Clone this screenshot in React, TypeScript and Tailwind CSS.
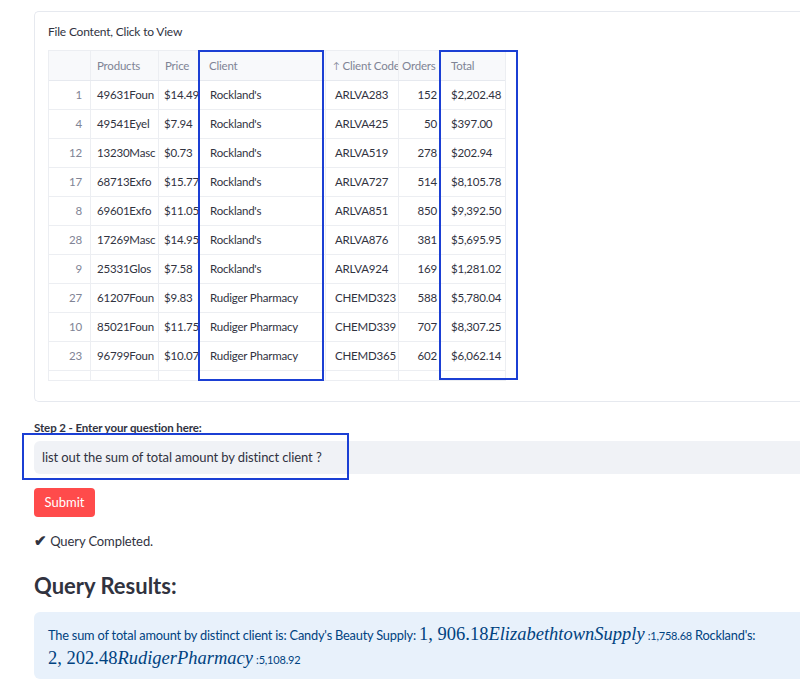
import React from "react";

const rows: [string, string, string, string, string, string, string][] = [
  ["1", "49631Foun", "$14.49", "Rockland's", "ARLVA283", "152", "$2,202.48"],
  ["4", "49541Eyel", "$7.94", "Rockland's", "ARLVA425", "50", "$397.00"],
  ["12", "13230Masc", "$0.73", "Rockland's", "ARLVA519", "278", "$202.94"],
  ["17", "68713Exfo", "$15.77", "Rockland's", "ARLVA727", "514", "$8,105.78"],
  ["8", "69601Exfo", "$11.05", "Rockland's", "ARLVA851", "850", "$9,392.50"],
  ["28", "17269Masc", "$14.95", "Rockland's", "ARLVA876", "381", "$5,695.95"],
  ["9", "25331Glos", "$7.58", "Rockland's", "ARLVA924", "169", "$1,281.02"],
  ["27", "61207Foun", "$9.83", "Rudiger Pharmacy", "CHEMD323", "588", "$5,780.04"],
  ["10", "85021Foun", "$11.75", "Rudiger Pharmacy", "CHEMD339", "707", "$8,307.25"],
  ["23", "96799Foun", "$10.07", "Rudiger Pharmacy", "CHEMD365", "602", "$6,062.14"],
];

const cols = "grid grid-cols-[42px_68px_40px_127px_73px_42px_65px]";
const font = { fontFamily: '"Source Sans Pro", "Lato", "Noto Sans", sans-serif' };
const mathFont = { fontFamily: '"Liberation Serif", "DejaVu Serif", serif' };

export default function App() {
  return (
    <div className="w-[800px] h-[683px] bg-white overflow-hidden relative text-[#31333f]" style={font}>
      <div className="pl-[34px] pt-[11px]">
        {/* File content container */}
        <div className="border border-[#e6e9ef] border-r-0 rounded-l-[5px] h-[391px] pl-[13px] pt-[12px]">
          <div className="text-[12px] leading-[16px] tracking-[-0.2px] text-[#31333f]">File Content, Click to View</div>
          <div className="relative mt-[10px] w-[460px]">
            <div className="border border-[#eceef2] h-[331px] overflow-hidden w-[458px] text-[11.5px] tracking-[-0.2px]">
              <div className={`${cols} h-[30px] bg-[#f8f9fb] border-b border-[#e6e9ef] text-[#808495]`}>
                <div className="border-r border-[#eceef2]"></div>
                <div className="border-r border-[#eceef2] px-[6px] flex items-center">Products</div>
                <div className="border-r border-[#eceef2] px-[6px] flex items-center">Price</div>
                <div className="border-r border-[#eceef2] px-[10px] flex items-center">Client</div>
                <div className="border-r border-[#eceef2] pl-[7px] flex items-center whitespace-nowrap overflow-hidden">
                  <span className="text-[9px] mr-[3px]">↑</span>Client Code
                </div>
                <div className="border-r border-[#eceef2] pl-[3px] flex items-center whitespace-nowrap overflow-hidden">Orders</div>
                <div className="px-[10px] flex items-center">Total</div>
              </div>
              {rows.map((r, i) => (
                <div key={i} className={`${cols} h-[29px] border-b border-[#eceef2] text-[#31333f]`}>
                  <div className="border-r border-[#eceef2] pr-[8px] flex items-center justify-end text-[#808495]">{r[0]}</div>
                  <div className="border-r border-[#eceef2] px-[6px] flex items-center whitespace-nowrap overflow-hidden">{r[1]}</div>
                  <div className="border-r border-[#eceef2] pl-[5px] flex items-center whitespace-nowrap overflow-hidden">{r[2]}</div>
                  <div className="border-r border-[#eceef2] px-[11px] flex items-center whitespace-nowrap">{r[3]}</div>
                  <div className="border-r border-[#eceef2] pl-[9px] flex items-center">{r[4]}</div>
                  <div className="border-r border-[#eceef2] pr-[3px] flex items-center justify-end">{r[5]}</div>
                  <div className="px-[10px] flex items-center">{r[6]}</div>
                </div>
              ))}
              <div className={`${cols} h-[10px]`}>
                <div className="border-r border-[#eceef2]"></div>
                <div className="border-r border-[#eceef2]"></div>
                <div className="border-r border-[#eceef2]"></div>
                <div className="border-r border-[#eceef2]"></div>
                <div className="border-r border-[#eceef2]"></div>
                <div className="border-r border-[#eceef2]"></div>
                <div></div>
              </div>
            </div>
            {/* Annotation boxes */}
            <div className="absolute left-[150px] top-0 w-[126px] h-[331px] border-2 border-[#1b3fd4]"></div>
            <div className="absolute left-[391px] top-0 w-[79px] h-[330px] border-2 border-[#1b3fd4]"></div>
          </div>
        </div>

        {/* Step 2 */}
        <div className="mt-[19px] text-[11.5px] font-bold leading-[14px] tracking-[-0.1px]">Step 2 - Enter your question here:</div>
        <div className="relative mt-[6px]">
          <div className="h-[33px] bg-[#f0f2f6] rounded-l-[6px] flex items-center pl-[8px] text-[13px] tracking-[-0.1px]">
            list out the sum of total amount by distinct client ?
          </div>
          <div className="absolute left-[-12px] top-[-8px] w-[327px] h-[47px] border-2 border-[#1b3fd4]"></div>
        </div>
        <button className="mt-[14px] h-[29px] w-[61px] rounded-[4px] bg-[#ff4b4b] text-white text-[13px] flex items-center justify-center">
          Submit
        </button>
        <div className="mt-[14px] text-[13px] leading-[18px] tracking-[-0.1px]">
          <span className="text-[15px] font-bold">✔</span> Query Completed.
        </div>
        <div className="mt-[22px] text-[22px] font-bold leading-[28px] text-[#31333f]">Query Results:</div>
        <div className="mt-[12px] bg-[#e8f1fb] rounded-l-[6px] h-[67px] pl-[14px] pt-[11px] text-[12.8px] leading-[22px] tracking-[-0.2px] text-[#004280]">
          The sum of total amount by distinct client is: Candy's Beauty Supply:{" "}
          <span className="text-[18.5px] tracking-normal" style={mathFont}>
            1, 906.18<i>ElizabethtownSupply</i>
          </span>{" "}
          <span className="text-[11px]">:1,758.68</span> Rockland's:
          <br />
          <span className="text-[18.5px] tracking-normal" style={mathFont}>
            2, 202.48<i>RudigerPharmacy</i>
          </span>{" "}
          <span className="text-[11px]">:5,108.92</span>
        </div>
      </div>
    </div>
  );
}
